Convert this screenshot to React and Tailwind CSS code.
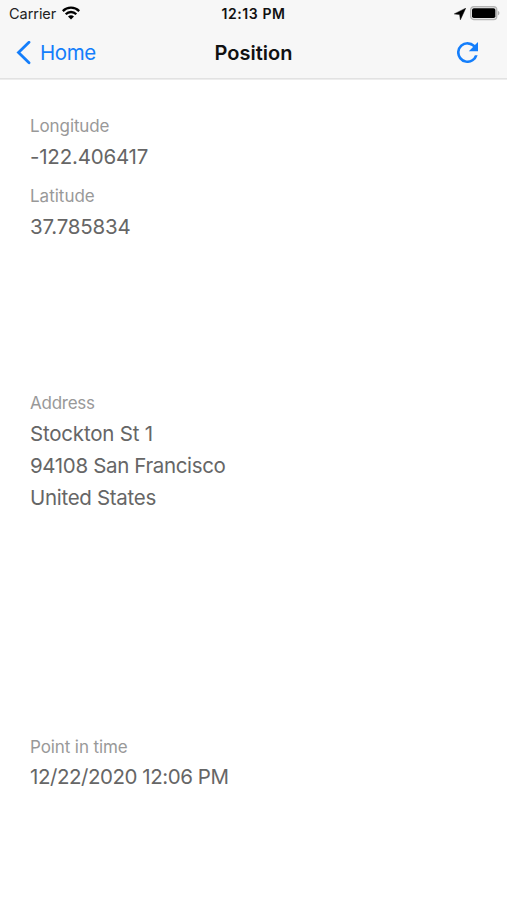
import React from "react";

function Label({ children, className = "" }) {
  return <div className={"w-max text-[17px] leading-[22px] text-[#999999] " + className}>{children}</div>;
}

function Value({ children, className = "" }) {
  return <div className={"w-max text-[20.5px] leading-[32px] text-[#666666] " + className}>{children}</div>;
}

export default function App() {
  return (
    <div className="flex h-[900px] w-[507px] flex-col overflow-hidden bg-white font-['Inter','Liberation_Sans',sans-serif]">
      <header className="h-[80px] shrink-0 border-b border-[#ededed] bg-[#f7f7f7] shadow-[inset_0_-1px_0_#e2e2e2]">
        <div className="grid h-[27px] grid-cols-[1fr_auto_1fr] items-center pl-[8px] pr-[8px] text-[14px] leading-[27px] text-black">
          <div className="flex items-center gap-[6px] pl-px text-[#222]">
            <span className="text-[14.5px] tracking-[-0.05px]">Carrier</span>
            <svg className="-mt-[2px]" width="18" height="14" viewBox="0 0 18 14" fill="none" stroke="black" strokeWidth="2.3">
              <path d="M.8 5.1a11.6 11.6 0 0 1 16.4 0M3.7 8.2a7.5 7.5 0 0 1 10.6 0" />
              <path d="M6 10.6a4.3 4.3 0 0 1 6 0l-3 3z" fill="black" stroke="none" />
            </svg>
          </div>
          <span className="font-semibold tracking-[0.6px] text-[#111]">12:13 PM</span>
          <div className="-mr-px flex items-center justify-end gap-[4px]">
            <svg width="12" height="12" viewBox="0 0 12 12"><path d="M.3 5.9 11.7.2 6.4 11.8 5.6 6.5z" stroke="black" strokeWidth=".5" strokeLinejoin="round" /></svg>
            <svg width="30" height="15" viewBox="0 0 30 15">
              <rect x=".7" y=".7" width="26" height="12.8" rx="3" fill="#f7f7f7" stroke="#b5b5b5" strokeWidth="1.4" />
              <rect x="2" y="2.2" width="23.4" height="9.8" rx="1.8" />
              <path d="M27.8 4.7q1.7.6 1.7 2.4t-1.7 2.4z" fill="#b0b0b0" />
            </svg>
          </div>
        </div>
        <div className="grid h-[51px] grid-cols-[1fr_auto_1fr] items-center px-[16px] text-[20px] text-[#147efb]">
          <div className="flex items-center gap-[9px]">
            <svg width="15" height="24" viewBox="0 0 15 24" fill="none" stroke="currentColor" strokeWidth="2.8" strokeLinecap="round"><path d="M13 1.3 2.5 11.5 13 21.7" /></svg>
            <span className="pt-[2px] text-[20.5px] tracking-[-0.4px]">Home</span>
          </div>
          <span className="font-semibold text-[#111]">Position</span>
          <svg className="mr-[13px] justify-self-end" width="21" height="21" viewBox="4 4 16 16" fill="currentColor"><path d="M17.65 6.35A7.96 7.96 0 0 0 12 4a8 8 0 1 0 7.73 10h-2.08A6 6 0 1 1 12 6c1.66 0 3.14.69 4.22 1.78L13 11h7V4z" /></svg>
        </div>
      </header>
      <main className="flex flex-col pl-[30px]">
        <Label className="mt-[35px] tracking-[-0.1px]">Longitude</Label>
        <Value className="mt-[4px] tracking-[-0.2px]">-122.406417</Value>
        <Label className="mt-[12px]">Latitude</Label>
        <Value className="mt-[4px] tracking-[-0.2px]">37.785834</Value>
        <Label className="mt-[149px] tracking-[-0.25px]">Address</Label>
        <Value className="mt-[4px] tracking-[-0.2px]">Stockton St 1</Value>
        <Value className="tracking-[-0.35px]">94108 San Francisco</Value>
        <Value className="tracking-[-0.3px]">United States</Value>
        <Label className="mt-[222px] tracking-[-0.1px]">Point in time</Label>
        <Value className="mt-[3px] tracking-[-0.45px]">12/22/2020 12:06 PM</Value>
      </main>
    </div>
  );
}
